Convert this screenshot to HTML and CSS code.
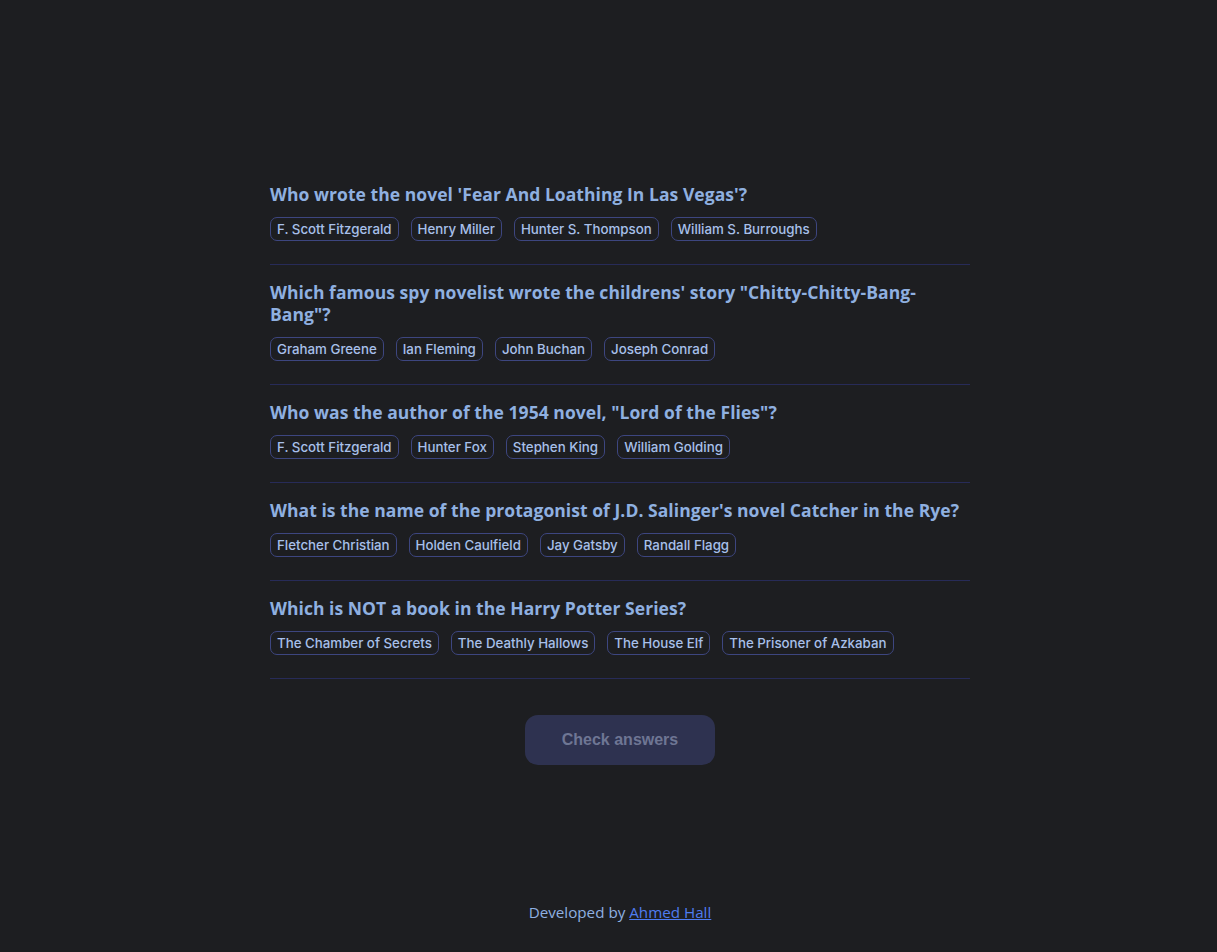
FILE: index.html
```html
<!DOCTYPE html>
<html lang="en">
<head>
<meta charset="utf-8">
<title>Quiz</title>
<link rel="stylesheet" href="styles.css">
</head>
<body>
<main class="page">
  <section class="quiz">
    <div class="question">
      <h2 class="q-title">Who wrote the novel 'Fear And Loathing In Las Vegas'?</h2>
      <div class="answers">
        <button class="answer">F. Scott Fitzgerald</button>
        <button class="answer">Henry Miller</button>
        <button class="answer">Hunter S. Thompson</button>
        <button class="answer">William S. Burroughs</button>
      </div>
    </div>
    <div class="question">
      <h2 class="q-title">Which famous spy novelist wrote the childrens' story "Chitty-Chitty-Bang-Bang"?</h2>
      <div class="answers">
        <button class="answer">Graham Greene</button>
        <button class="answer">Ian Fleming</button>
        <button class="answer">John Buchan</button>
        <button class="answer">Joseph Conrad</button>
      </div>
    </div>
    <div class="question">
      <h2 class="q-title">Who was the author of the 1954 novel, "Lord of the Flies"?</h2>
      <div class="answers">
        <button class="answer">F. Scott Fitzgerald</button>
        <button class="answer">Hunter Fox</button>
        <button class="answer">Stephen King</button>
        <button class="answer">William Golding</button>
      </div>
    </div>
    <div class="question">
      <h2 class="q-title">What is the name of the protagonist of J.D. Salinger's novel Catcher in the Rye?</h2>
      <div class="answers">
        <button class="answer">Fletcher Christian</button>
        <button class="answer">Holden Caulfield</button>
        <button class="answer">Jay Gatsby</button>
        <button class="answer">Randall Flagg</button>
      </div>
    </div>
    <div class="question">
      <h2 class="q-title">Which is NOT a book in the Harry Potter Series?</h2>
      <div class="answers">
        <button class="answer">The Chamber of Secrets</button>
        <button class="answer">The Deathly Hallows</button>
        <button class="answer">The House Elf</button>
        <button class="answer">The Prisoner of Azkaban</button>
      </div>
    </div>
    <div class="actions">
      <button class="check">Check answers</button>
    </div>
  </section>
  <footer class="footer">Developed by <a href="#" class="footer-link">Ahmed Hall</a></footer>
</main>
</body>
</html>
```

FILE: styles.css
```css
* { box-sizing: border-box; }
html, body { margin: 0; padding: 0; }
body {
  background: #1d1e21;
  color: #8fb0e0;
  font-family: "Open Sans", sans-serif;
}
.page {
  min-height: 952px;
  padding-left: 23px;
  display: flex;
  flex-direction: column;
  align-items: center;
}
.quiz {
  width: 700px;
  padding-top: 167px;
}
.question {
  padding: 16px 0 23px;
  border-bottom: 1px solid #272b58;
}
.q-title {
  margin: 0 0 12px;
  font-size: 17.5px;
  line-height: 22px;
  font-weight: 700;
  letter-spacing: 0.05px;
  color: #8fb0e0;
}
.answers {
  display: flex;
  flex-wrap: wrap;
  gap: 12px;
}
.answer {
  height: 24px;
  padding: 0 6px;
  background: transparent;
  border: 1px solid #3d4680;
  border-radius: 7px;
  color: #a8c0ea;
  font-family: "Inter", sans-serif;
  font-size: 13.3px;
  font-weight: 500;
  line-height: 22px;
}
.actions {
  display: flex;
  justify-content: center;
  padding-top: 36px;
}
.check {
  width: 190px;
  height: 50px;
  border: none;
  border-radius: 13px;
  background: #2e3250;
  color: #6e7694;
  font-family: "Liberation Sans", Arial, sans-serif;
  font-weight: 700;
  font-size: 16px;
}
.footer {
  margin-top: auto;
  padding-bottom: 30px;
  font-family: "Open Sans", sans-serif;
  font-size: 15.2px;
  color: #8fb0e0;
}
.footer-link {
  color: #4f7cf0;
}
```
